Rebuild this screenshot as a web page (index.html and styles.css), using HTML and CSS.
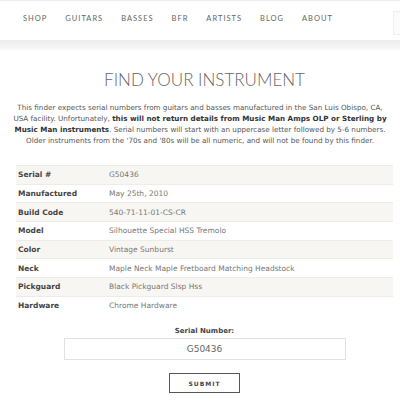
FILE: index.html
```html
<!DOCTYPE html>
<html lang="en">
<head>
  <meta charset="UTF-8">
  <meta name="viewport" content="width=device-width, initial-scale=1.0">
  <title>Find Your Instrument</title>
  <link rel="stylesheet" href="styles.css">
</head>
<body>

<header class="site-header">
  <nav class="main-nav">
    <a href="#">SHOP</a>
    <a href="#">GUITARS</a>
    <a href="#">BASSES</a>
    <a href="#">BFR</a>
    <a href="#">ARTISTS</a>
    <a href="#">BLOG</a>
    <a href="#">ABOUT</a>
  </nav>
  <div class="search-stub"></div>
</header>
<div class="header-shadow"></div>

<main class="finder">
  <h1>FIND YOUR INSTRUMENT</h1>

  <p class="intro">
    This finder expects serial numbers from guitars and basses manufactured in the San Luis Obispo, CA,<br>
    USA facility. Unfortunately, <b>this will not return details from Music Man Amps OLP or Sterling by<br>
    Music Man instruments</b>. Serial numbers will start with an uppercase letter followed by 5-6 numbers.<br>
    Older instruments from the '70s and '80s will be all numeric, and will not be found by this finder.
  </p>

  <table class="results">
    <tr><th>Serial #</th><td>G50436</td></tr>
    <tr><th>Manufactured</th><td>May 25th, 2010</td></tr>
    <tr><th>Build Code</th><td>540-71-11-01-CS-CR</td></tr>
    <tr><th>Model</th><td>Silhouette Special HSS Tremolo</td></tr>
    <tr><th>Color</th><td>Vintage Sunburst</td></tr>
    <tr><th>Neck</th><td>Maple Neck Maple Fretboard Matching Headstock</td></tr>
    <tr><th>Pickguard</th><td>Black Pickguard Slsp Hss</td></tr>
    <tr><th>Hardware</th><td>Chrome Hardware</td></tr>
  </table>

  <form class="serial-form" onsubmit="return false">
    <label for="serial">Serial Number:</label>
    <input id="serial" type="text" value="G50436">
    <button type="submit" class="button">SUBMIT</button>
  </form>
</main>

</body>
</html>
```

FILE: styles.css
```css
body {
  margin: 0;
  font-family: "DejaVu Sans", sans-serif;
  color: #555;
  background: #fff;
}

.site-header {
  height: 40px;
  border-top: 1px solid #eee;
  box-sizing: border-box;
  display: flex;
  align-items: center;
  justify-content: space-between;
  background: #fff;
}

.main-nav {
  display: flex;
  gap: 18px;
  padding-left: 23px;
  margin-top: -4px;
}

.main-nav a {
  font-family: Lato, sans-serif;
  font-size: 7.5px;
  letter-spacing: 1px;
  color: #666;
  text-decoration: none;
}

.search-stub {
  width: 6px;
  height: 22px;
  border: 1px solid #f0f0f0;
  border-right: none;
  background: #fbfbfb;
  margin-top: 4px;
}

.header-shadow {
  height: 10px;
  background: linear-gradient(#ececec, #f8f8f8);
}

.finder {
  padding: 0 7px 0 16px;
}

h1 {
  margin: 19px 0 0;
  font-family: Lato, sans-serif;
  font-size: 17px;
  font-weight: 300;
  text-align: center;
  color: #666;
}

.intro {
  margin: 12px -7px 0 -16px;
  font-size: 7.2px;
  line-height: 11px;
  text-align: center;
  white-space: nowrap;
  color: #555;
}

.intro b {
  color: #333;
}

.results {
  width: 100%;
  margin-top: 19px;
  border-collapse: collapse;
  font-size: 7.5px;
}

.results tr {
  height: 18.7px;
}

.results tr:nth-child(odd) {
  background: #f8f6f2;
}

.results th, .results td {
  border-top: 1px solid #eeece8;
  text-align: left;
  padding: 0 2px;
}

.results th {
  width: 87px;
  color: #444;
  font-weight: 700;
}

.results td {
  color: #777;
}

.serial-form {
  display: flex;
  flex-direction: column;
  align-items: center;
  margin-top: 12px;
}

.serial-form label {
  font-size: 7px;
  font-weight: 700;
  color: #444;
}

.serial-form input {
  margin-top: 3px;
  width: 282px;
  height: 22px;
  box-sizing: border-box;
  border: 1px solid #e2e2e2;
  text-align: center;
  font-family: "DejaVu Sans", sans-serif;
  font-size: 9px;
  color: #666;
}

.button {
  margin-top: 13px;
  width: 71px;
  height: 20px;
  background: #fff;
  border: 1px solid #555;
  font-family: "DejaVu Sans", sans-serif;
  font-size: 6px;
  font-weight: 700;
  letter-spacing: 1px;
  color: #444;
  cursor: pointer;
}
```
